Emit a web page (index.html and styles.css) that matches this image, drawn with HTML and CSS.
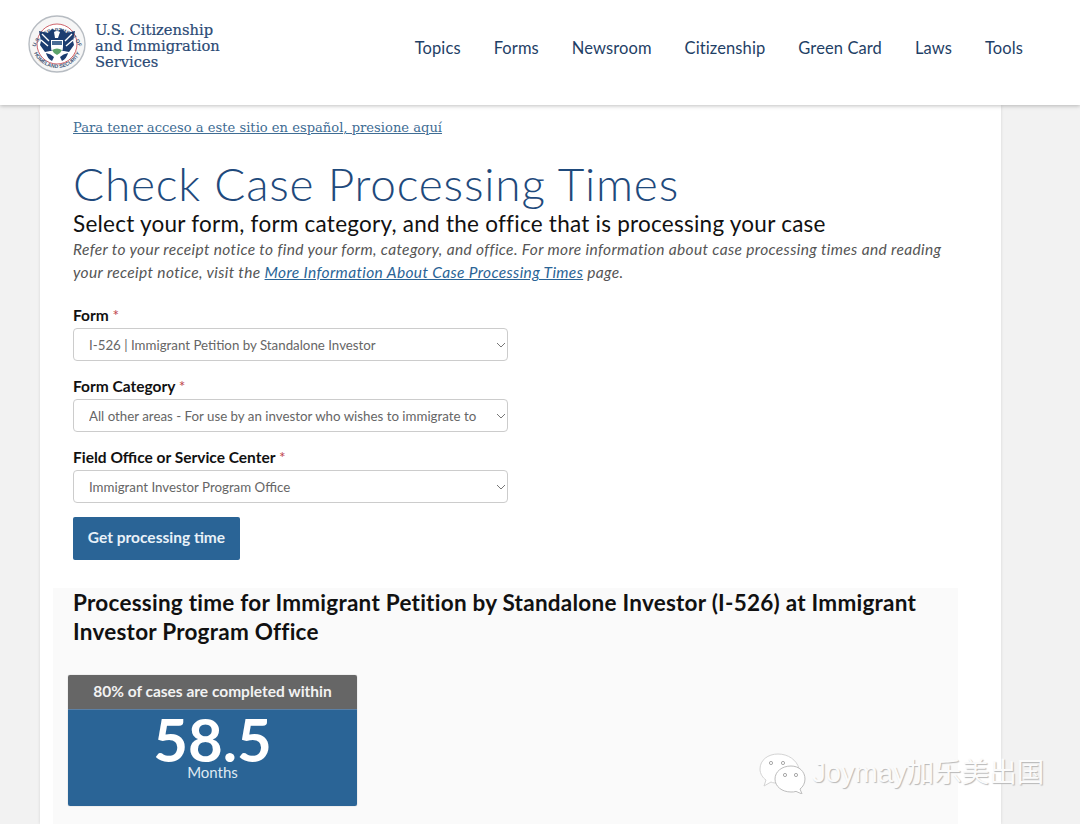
FILE: index.html
```html
<!DOCTYPE html>
<html lang="en">
<head>
  <meta charset="UTF-8">
  <meta name="viewport" content="width=device-width, initial-scale=1.0">
  <title>Check Case Processing Times</title>
  <link rel="stylesheet" href="styles.css">
</head>
<body>
  <header class="site-header">
    <a class="brand" href="#">
      <svg class="seal" viewBox="0 0 58 58" width="58" height="58">
        <defs>
          <path id="ringTop" d="M6.500 35A23 23 0 0 1 51.500 35"/>
          <path id="ringBottom" d="M4.500 33A25 25 0 0 0 53.500 33"/>
        </defs>
        <circle cx="29" cy="29" r="28" fill="#f6f6f6" stroke="#b7bcc2" stroke-width="1.400"/>
        <circle cx="29" cy="29" r="20" fill="#fff" stroke="#c9525a" stroke-width="0.900"/>
        <text class="seal-text"><textPath href="#ringTop" startOffset="50%" text-anchor="middle">U.S. DEPARTMENT OF</textPath></text>
        <text class="seal-text"><textPath href="#ringBottom" startOffset="50%" text-anchor="middle">HOMELAND SECURITY</textPath></text>
        <path d="M11 16 L20 18 L24 14 L29 16 L34 14 L38 18 L47 16 L45 26 L46 30 L41 37 L36 36 L22 36 L17 37 L12 30 L13 26 Z" fill="#1c3d70"/>
        <path d="M14 19l7 7M13 25l7 6M44 19l-7 7M45 25l-7 6" stroke="#fff" stroke-width="1.400" fill="none"/>
        <path d="M26 17q3-2 6 0l-1 3-1 3h-3z" fill="#fff"/>
        <path d="M23 25h12v7q0 6-6 9q-6-3-6-9z" fill="#fff"/>
        <path d="M24 26h10v4h-10z" fill="#4a6d96"/>
        <path d="M24 35q5-3 10 0l-2 3-3 2-3-2z" fill="#5ba36a"/>
        <path d="M18 38q5 1 8 4l-2 4q-5-3-6-8zM40 38q-5 1-8 4l2 4q5-3 6-8z" fill="#1c3d70"/>
      </svg>
      <span class="brand-name">U.S. Citizenship<br>and Immigration<br>Services</span>
    </a>
    <nav class="main-nav">
      <a href="#">Topics</a>
      <a href="#">Forms</a>
      <a href="#">Newsroom</a>
      <a href="#">Citizenship</a>
      <a href="#">Green Card</a>
      <a href="#">Laws</a>
      <a href="#">Tools</a>
    </nav>
  </header>

  <main class="page-card">
    <a class="lang-link" href="#">Para tener acceso a este sitio en español, presione aquí</a>
    <h1>Check Case Processing Times</h1>
    <h2>Select your form, form category, and the office that is processing your case</h2>
    <p class="hint">Refer to your receipt notice to find your form, category, and office. For more information about case processing times and reading your receipt notice, visit the <a href="#">More Information About Case Processing Times</a> page.</p>

    <form class="case-form">
      <div class="field">
        <label for="form">Form <span class="req">*</span></label>
        <div class="select-wrap">
          <select id="form"><option>I-526 | Immigrant Petition by Standalone Investor</option></select>
          <svg class="chevron" viewBox="0 0 10 6" width="10" height="6"><path d="M1 1l4 4 4-4" fill="none" stroke="#777" stroke-width="1"/></svg>
        </div>
      </div>
      <div class="field">
        <label for="category">Form Category <span class="req">*</span></label>
        <div class="select-wrap">
          <select id="category"><option>All other areas - For use by an investor who wishes to immigrate to the United States</option></select>
          <svg class="chevron" viewBox="0 0 10 6" width="10" height="6"><path d="M1 1l4 4 4-4" fill="none" stroke="#777" stroke-width="1"/></svg>
        </div>
      </div>
      <div class="field">
        <label for="office">Field Office or Service Center <span class="req">*</span></label>
        <div class="select-wrap">
          <select id="office"><option>Immigrant Investor Program Office</option></select>
          <svg class="chevron" viewBox="0 0 10 6" width="10" height="6"><path d="M1 1l4 4 4-4" fill="none" stroke="#777" stroke-width="1"/></svg>
        </div>
      </div>
      <button class="submit-btn" type="button">Get processing time</button>
    </form>

    <section class="result">
      <h3>Processing time for Immigrant Petition by Standalone Investor (I-526) at Immigrant Investor Program Office</h3>
      <div class="time-card">
        <div class="time-head">80% of cases are completed within</div>
        <div class="time-body">
          <span class="time-num">58.5</span>
          <span class="time-unit">Months</span>
        </div>
      </div>
    </section>
  </main>

  <div class="watermark">
    <svg class="wm-icon" viewBox="0 0 48 42" width="48" height="42">
      <path d="M20 2C10 2 2 8 2 17c0 5 3 9 6 11l-2 6 7-4c2 1 4 1 7 1 1 0 2 0 3-.2-1-8 7-15 18-14C39 8 30 2 20 2z" fill="#fff" stroke="#d4d4d4"/>
      <path d="M33 14c-9 0-16 5.500-16 13s7 13 16 13c2 0 3 0 5-.6l6 2.600-2-5c3-2 5-6 5-10 0-7.500-6-13-14-13z" fill="#fff" stroke="#bdbdbd"/>
      <circle cx="13" cy="11" r="1.600" fill="none" stroke="#aaa"/>
      <circle cx="25" cy="11" r="1.600" fill="none" stroke="#aaa"/>
      <circle cx="27" cy="23" r="1.600" fill="none" stroke="#aaa"/>
      <circle cx="38" cy="23" r="1.600" fill="none" stroke="#aaa"/>
    </svg>
    <span class="wm-text">Joymay加乐美出国</span>
  </div>
</body>
</html>
```

FILE: styles.css
```css
html, body {
  margin: 0;
  padding: 0;
  height: 824px;
  overflow: hidden;
  background: #f2f2f2;
  font-family: "Lato", "Noto Sans", sans-serif;
  color: #111;
}
a {
  color: #2a6496;
}

.site-header {
  position: relative;
  z-index: 2;
  height: 105px;
  box-sizing: border-box;
  background: #fff;
  box-shadow: 0 1px 4px rgba(0,0,0,0.25);
  display: flex;
  align-items: flex-start;
  justify-content: space-between;
  padding: 15px 57px 0 28px;
}
.brand {
  display: flex;
  gap: 9px;
  text-decoration: none;
}
.seal-text {
  font-family: "Liberation Sans", sans-serif;
  font-size: 5.200px;
  font-weight: 700;
  fill: #3f5676;
}
.brand-name {
  margin-top: 7px;
  font-family: "DejaVu Serif", serif;
  font-size: 14.700px;
  line-height: 16px;
  color: #2b4a75;
  -webkit-text-stroke: 0.2px #2b4a75;
}
.main-nav {
  display: flex;
  gap: 33px;
  padding-top: 23px;
}
.main-nav a {
  font-size: 16.500px;
  line-height: 20px;
  letter-spacing: 0.1px;
  color: #1f3f66;
  text-decoration: none;
}

.page-card {
  width: 961px;
  box-sizing: border-box;
  height: 719px;
  margin-left: 40px;
  padding: 13px 33px 0;
  background: #fff;
  box-shadow: 0 0 3px rgba(0,0,0,0.12);
}
.lang-link {
  display: block;
  width: max-content;
  font-family: "DejaVu Serif", serif;
  font-size: 13.100px;
  line-height: 19px;
  color: #3f6d94;
}
h1 {
  margin: 21px 0 0;
  font-size: 46px;
  line-height: 52px;
  font-weight: 300;
  color: #1f4a7c;
  letter-spacing: 0.8px;
}
h2 {
  margin: 1px 0 0;
  font-size: 22.500px;
  line-height: 26px;
  font-weight: 400;
  letter-spacing: 0.25px;
  color: #111;
}
.hint {
  margin: 1px 0 0;
  width: 880px;
  font-size: 15.500px;
  line-height: 23px;
  font-style: italic;
  letter-spacing: 0.36px;
  color: #555;
}

.case-form {
  margin-top: 21px;
}
.field {
  margin-bottom: 15px;
}
.field label {
  display: block;
  font-size: 15.500px;
  line-height: 20px;
  font-weight: 700;
  margin-bottom: 3px;
}
.req {
  color: #c0474f;
  font-weight: 400;
}
.select-wrap {
  position: relative;
  width: 435px;
}
.select-wrap select {
  display: block;
  width: 100%;
  height: 33px;
  box-sizing: border-box;
  padding: 0 28px 0 15px;
  appearance: none;
  background: #fff;
  border: 1px solid #ccc;
  border-radius: 4px;
  font-family: inherit;
  font-size: 13.300px;
  color: #666;
}
.chevron {
  position: absolute;
  right: 2px;
  top: 14px;
}
.submit-btn {
  display: block;
  width: 167px;
  height: 43px;
  margin-top: -1px;
  padding: 0 0 3px;
  background: #2a6496;
  color: #e8f1f8;
  border: none;
  border-radius: 2px;
  font-family: inherit;
  font-size: 15.500px;
  font-weight: 700;
}

.result {
  margin: 28px 10px 0 -20px;
  padding: 0 20px;
  height: 240px;
  background: #fafafa;
}
.result h3 {
  margin: 0;
  font-size: 22.500px;
  line-height: 29px;
  font-weight: 700;
  letter-spacing: 0.25px;
  color: #111;
}
.time-card {
  width: 289px;
  margin: 29px 0 0 -5px;
  border-radius: 2px;
  overflow: hidden;
  text-align: center;
  box-shadow: 0 0 1px rgba(0,0,0,0.45);
}
.time-head {
  height: 34px;
  line-height: 32px;
  background: #666;
  color: #f2f2f2;
  font-size: 15.500px;
  font-weight: 700;
}
.time-body {
  height: 97px;
  border-top: 1px solid #5a80a6;
  background: #2a6496;
  color: #fff;
  box-sizing: border-box;
}
.time-num {
  display: block;
  padding-top: 5px;
  font-size: 60px;
  line-height: 48px;
  font-weight: 700;
}
.time-unit {
  display: block;
  font-size: 15px;
  line-height: 18px;
  color: #dfe9f2;
}

.watermark {
  position: absolute;
  left: 758px;
  top: 752px;
  display: flex;
  align-items: center;
  gap: 6px;
}
.wm-text {
  font-family: "Liberation Sans", "Noto Sans CJK SC", sans-serif;
  font-size: 27.500px;
  line-height: 42px;
  color: #fbfbfb;
  text-shadow: 1px 1px 1px #b8b8b8;
}
```
